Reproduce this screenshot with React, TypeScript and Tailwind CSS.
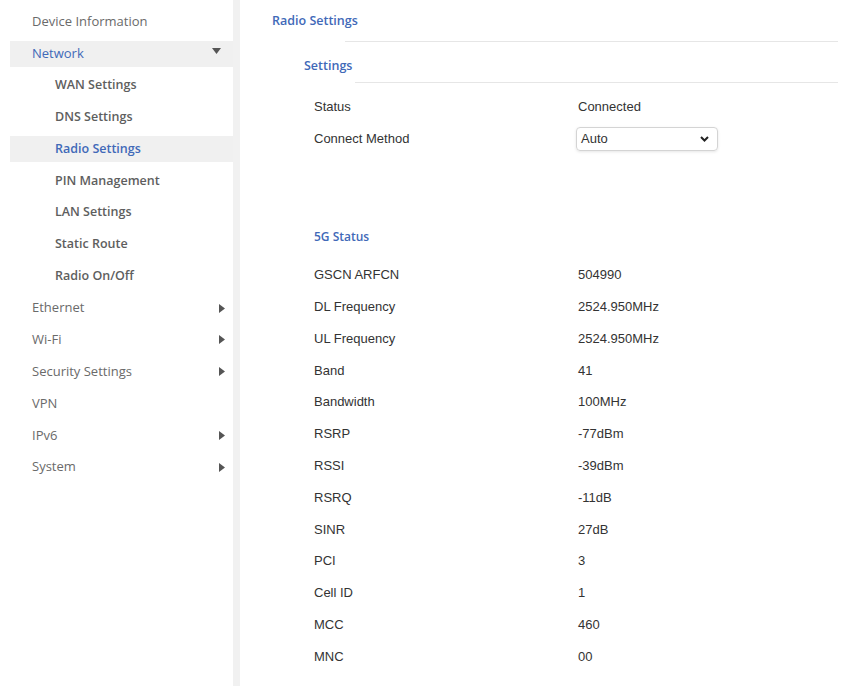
import React from "react";

type NavItem = { label: string; sub?: boolean; active?: boolean; arrow?: "down" | "right"; blue?: boolean };

const nav: NavItem[] = [
  { label: "Device Information" },
  { label: "Network", active: true, arrow: "down", blue: true },
  { label: "WAN Settings", sub: true },
  { label: "DNS Settings", sub: true },
  { label: "Radio Settings", sub: true, active: true, blue: true },
  { label: "PIN Management", sub: true },
  { label: "LAN Settings", sub: true },
  { label: "Static Route", sub: true },
  { label: "Radio On/Off", sub: true },
  { label: "Ethernet", arrow: "right" },
  { label: "Wi-Fi", arrow: "right" },
  { label: "Security Settings", arrow: "right" },
  { label: "VPN" },
  { label: "IPv6", arrow: "right" },
  { label: "System", arrow: "right" },
];

const status: [string, string][] = [
  ["GSCN ARFCN", "504990"],
  ["DL Frequency", "2524.950MHz"],
  ["UL Frequency", "2524.950MHz"],
  ["Band", "41"],
  ["Bandwidth", "100MHz"],
  ["RSRP", "-77dBm"],
  ["RSSI", "-39dBm"],
  ["RSRQ", "-11dB"],
  ["SINR", "27dB"],
  ["PCI", "3"],
  ["Cell ID", "1"],
  ["MCC", "460"],
  ["MNC", "00"],
];

function Arrow({ dir }: { dir: "down" | "right" }) {
  if (dir === "down") {
    return (
      <svg width="9" height="6" viewBox="0 0 9 6" className="mb-[6px]">
        <polygon points="0,0 9,0 4.5,6" fill="#555" />
      </svg>
    );
  }
  return (
    <svg width="6" height="9" viewBox="0 0 6 9">
      <polygon points="0,0 6,4.5 0,9" fill="#555" />
    </svg>
  );
}

export default function App() {
  return (
    <div className="flex h-[686px] w-[845px] overflow-hidden bg-white text-[#333]" style={{ fontFamily: '"Liberation Sans", Arial, sans-serif' }}>
      {/* Sidebar */}
      <div className="flex w-[233px] flex-col gap-[5.8px] pl-[10px] pt-[9px]" style={{ fontFamily: '"Open Sans", "Liberation Sans", sans-serif' }}>
        {nav.map((n) => (
          <div
            key={n.label}
            className={`flex h-[26px] items-center justify-between ${n.active ? "bg-[#f0f0f0]" : ""} ${n.sub ? "pl-[45px]" : "pl-[22px]"} ${n.arrow === "down" ? "pr-[12px]" : "pr-[8px]"}`}
          >
            <span
              className={`${n.sub ? "text-[12.5px] font-semibold" : "text-[13px]"} ${n.blue ? "text-[#4169b8]" : n.sub ? "text-[#5e5e5e]" : "text-[#6a6a6a]"}`}
            >
              {n.label}
            </span>
            {n.arrow && <Arrow dir={n.arrow} />}
          </div>
        ))}
      </div>
      {/* Separator */}
      <div className="w-[7px] bg-[#f1f1f1]" />
      {/* Main */}
      <div className="flex flex-1 flex-col pl-[32px] pr-[7px]">
        <div className="flex h-[41px] items-center pt-[2px]">
          <span className="text-[12.5px] font-semibold text-[#4169b8]" style={{ fontFamily: '"Open Sans", sans-serif' }}>
            Radio Settings
          </span>
        </div>
        <div className="ml-[73px] h-px bg-[#e6e6e6]" />
        <div className="flex h-[40px] items-center pl-[32px] pt-[8px]">
          <span className="text-[12.5px] font-semibold text-[#4169b8]" style={{ fontFamily: '"Open Sans", sans-serif' }}>
            Settings
          </span>
        </div>
        <div className="ml-[83px] h-px bg-[#e6e6e6]" />

        <div className="mt-[8px] flex flex-col pl-[42px] text-[13px]">
          <div className="flex h-[32px] items-center">
            <span className="w-[264px]">Status</span>
            <span>Connected</span>
          </div>
          <div className="flex h-[32px] items-center">
            <span className="w-[262px]">Connect Method</span>
            <div className="flex h-[24px] w-[142px] items-center justify-between rounded-[4px] border border-[#d4d4d4] pl-[4px] pr-[8px] shadow-[0_1px_3px_rgba(0,0,0,0.1)]">
              <span>Auto</span>
              <svg width="9" height="6" viewBox="0 0 9 6">
                <polyline points="1,1 4.5,4.5 8,1" fill="none" stroke="#222" strokeWidth="2" />
              </svg>
            </div>
          </div>

          <div className="mt-[66px] flex h-[32px] items-center">
            <span className="text-[12px] font-semibold text-[#4169b8]" style={{ fontFamily: '"Open Sans", sans-serif' }}>
              5G Status
            </span>
          </div>
          <div className="mt-[6px] flex flex-col">
            {status.map(([k, v]) => (
              <div key={k} className="flex h-[31.8px] items-center">
                <span className="w-[264px]">{k}</span>
                <span>{v}</span>
              </div>
            ))}
          </div>
        </div>
      </div>
    </div>
  );
}
